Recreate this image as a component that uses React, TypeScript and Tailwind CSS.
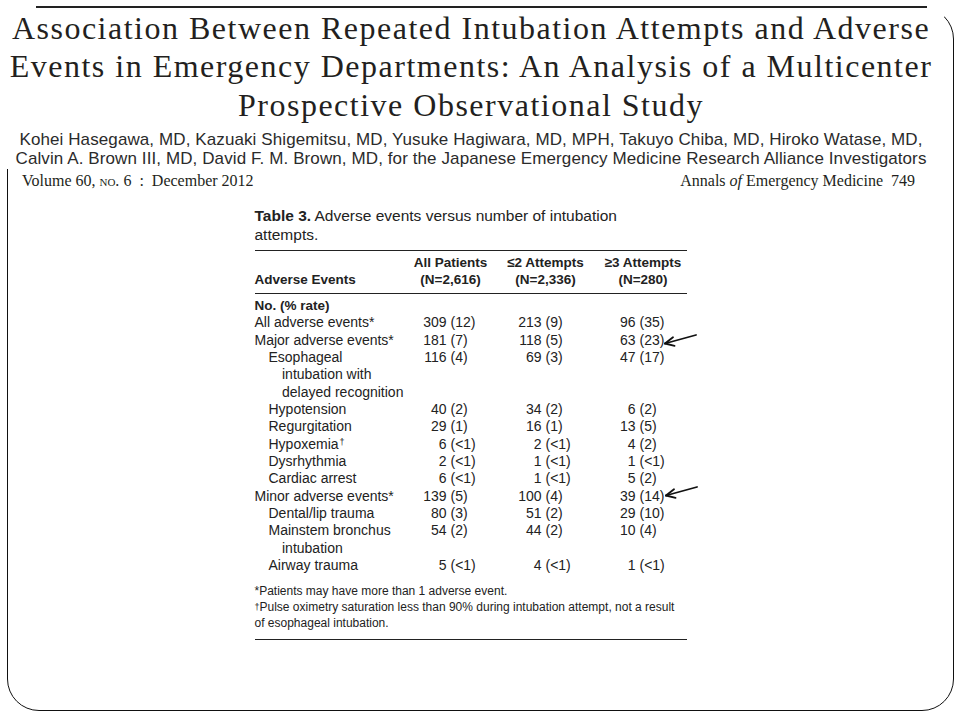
import React from "react";

type Cell = [string, string];
interface Row {
    label: React.ReactNode;
    indent?: 0 | 1 | 2;
    bold?: boolean;
    cells?: Cell[];
}

const rows: Row[] = [
    { label: "No. (% rate)", bold: true },
    { label: "All adverse events*", cells: [["309", "(12)"], ["213", "(9)"], ["96", "(35)"]] },
    { label: "Major adverse events*", cells: [["181", "(7)"], ["118", "(5)"], ["63", "(23)"]] },
    { label: "Esophageal", indent: 1, cells: [["116", "(4)"], ["69", "(3)"], ["47", "(17)"]] },
    { label: "intubation with", indent: 2 },
    { label: "delayed recognition", indent: 2 },
    { label: "Hypotension", indent: 1, cells: [["40", "(2)"], ["34", "(2)"], ["6", "(2)"]] },
    { label: "Regurgitation", indent: 1, cells: [["29", "(1)"], ["16", "(1)"], ["13", "(5)"]] },
    {
        label: (
            <>
                Hypoxemia<sup className="text-[9px] relative -top-[4px] ml-[1px]">†</sup>
            </>
        ),
        indent: 1,
        cells: [["6", "(<1)"], ["2", "(<1)"], ["4", "(2)"]],
    },
    { label: "Dysrhythmia", indent: 1, cells: [["2", "(<1)"], ["1", "(<1)"], ["1", "(<1)"]] },
    { label: "Cardiac arrest", indent: 1, cells: [["6", "(<1)"], ["1", "(<1)"], ["5", "(2)"]] },
    { label: "Minor adverse events*", cells: [["139", "(5)"], ["100", "(4)"], ["39", "(14)"]] },
    { label: "Dental/lip trauma", indent: 1, cells: [["80", "(3)"], ["51", "(2)"], ["29", "(10)"]] },
    { label: "Mainstem bronchus", indent: 1, cells: [["54", "(2)"], ["44", "(2)"], ["10", "(4)"]] },
    { label: "intubation", indent: 2 },
    { label: "Airway trauma", indent: 1, cells: [["5", "(<1)"], ["4", "(<1)"], ["1", "(<1)"]] },
];

const indentClass = ["pl-0", "pl-[14px]", "pl-[27.5px]"];
const numWidth = ["w-[37px]", "w-[50px]", "w-[36px]"];

function Arrow() {
    // hand-drawn pointer used on the slide
    return (
        <svg width="42" height="22" viewBox="0 0 42 22" fill="none" stroke="#111" strokeWidth="1.8" strokeLinecap="round">
            <path d="M36 4 L5 12.5" />
            <path d="M5 12.5 L13 6.2" />
            <path d="M5 12.5 L14.6 14.8" />
        </svg>
    );
}

export default function App() {
    return (
        <div className="relative w-[960px] h-[720px] bg-white overflow-hidden text-[#1a1a1a]">
            {/* slide frame */}
            <div className="ml-[7px] mt-[7px] w-[947px] h-[704px] rounded-[32px] border-[1.5px] border-[#111]">
                <div className="ml-[246.5px] pt-[199px] w-[432px] font-['Liberation_Sans',Arial,sans-serif]">
                    <div className="text-[15.5px] leading-[18.5px] text-[#222]">
                        <span className="font-bold">Table 3.</span> Adverse events versus number of intubation
                        <br />
                        attempts.
                    </div>
                    <div className="mt-[6px] h-[1px] bg-[#222]" />
                    <div className="mt-[3px] grid grid-cols-[155px_82px_108px_87px] text-[13.5px] leading-[17.3px] font-bold text-[#222]">
                        <div className="flex items-end">Adverse Events</div>
                        <div className="text-center">All Patients<br />(N=2,616)</div>
                        <div className="text-center">≤2 Attempts<br />(N=2,336)</div>
                        <div className="text-center">≥3 Attempts<br />(N=280)</div>
                    </div>
                    <div className="mt-[4.5px] h-[1px] bg-[#222]" />
                    <div className="mt-[3px] flex flex-col text-[14px] leading-[17.33px] text-[#222]">
                        {rows.map((r, i) => (
                            <div key={i} className="grid grid-cols-[155px_82px_108px_87px] h-[17.33px]">
                                <div className={`${indentClass[r.indent ?? 0]} whitespace-nowrap ${r.bold ? "font-bold text-[13.5px]" : ""}`}>
                                    {r.label}
                                </div>
                                {r.cells?.map((c, j) => (
                                    <div key={j} className="flex whitespace-nowrap">
                                        <span className={`${numWidth[j]} text-right`}>{c[0]}</span>
                                        <span className="ml-[4px]">{c[1]}</span>
                                    </div>
                                ))}
                            </div>
                        ))}
                    </div>
                    <div className="mt-[10px] text-[12px] leading-[15.8px] text-[#222] whitespace-nowrap">
                        *Patients may have more than 1 adverse event.
                        <br />
                        <sup className="text-[9px] relative -top-[1px]">†</sup>Pulse oximetry saturation less than 90% during intubation attempt, not a result
                        <br />
                        of esophageal intubation.
                    </div>
                    <div className="mt-[7px] h-[1px] bg-[#222]" />
                </div>
            </div>

            {/* arrows drawn over the table */}
            <div className="absolute left-[660px] top-[331px]">
                <Arrow />
            </div>
            <div className="absolute left-[661px] top-[483px]">
                <Arrow />
            </div>

            {/* article header pasted over the frame */}
            <div className="absolute left-0 top-0 w-[944px]">
                <div className="h-[169px] bg-white">
                    <div className="pt-[6px] pl-[36px]">
                        <div className="w-[891px] h-[1.5px] bg-[#222]" />
                    </div>
                    <div className="mt-[1.4px] w-[942px] text-center font-['Liberation_Serif','Times_New_Roman',serif] text-[32px] leading-[38.35px] tracking-[1.5px] text-[#231f20]">
                        <div className="whitespace-nowrap">Association Between Repeated Intubation Attempts and Adverse</div>
                        <div className="whitespace-nowrap">Events in Emergency Departments: An Analysis of a Multicenter</div>
                        <div className="whitespace-nowrap">Prospective Observational Study</div>
                    </div>
                    <div className="mt-[7.5px] w-[942px] text-center font-['Liberation_Sans',Arial,sans-serif] text-[17px] leading-[18.3px] tracking-[0.1px] text-[#2b2b2b]">
                        <div className="whitespace-nowrap">
                            Kohei Hasegawa, MD, Kazuaki Shigemitsu, MD, Yusuke Hagiwara, MD, MPH, Takuyo Chiba, MD, Hiroko Watase, MD,
                        </div>
                        <div className="whitespace-nowrap">
                            Calvin A. Brown III, MD, David F. M. Brown, MD, for the Japanese Emergency Medicine Research Alliance Investigators
                        </div>
                    </div>
                </div>
                <div className="mt-[2.5px] pl-[22px] w-[915px] flex justify-between font-['Liberation_Serif','Times_New_Roman',serif] text-[16px] leading-[18px] text-[#231f20]">
                    <span className="whitespace-nowrap">
                        Volume 60, <span className="[font-variant:small-caps]">no.</span> 6&nbsp;&nbsp;:&nbsp;&nbsp;December 2012
                    </span>
                    <span className="whitespace-nowrap">
                        Annals <span className="italic">of</span> Emergency Medicine&nbsp;&nbsp;749
                    </span>
                </div>
            </div>
        </div>
    );
}
